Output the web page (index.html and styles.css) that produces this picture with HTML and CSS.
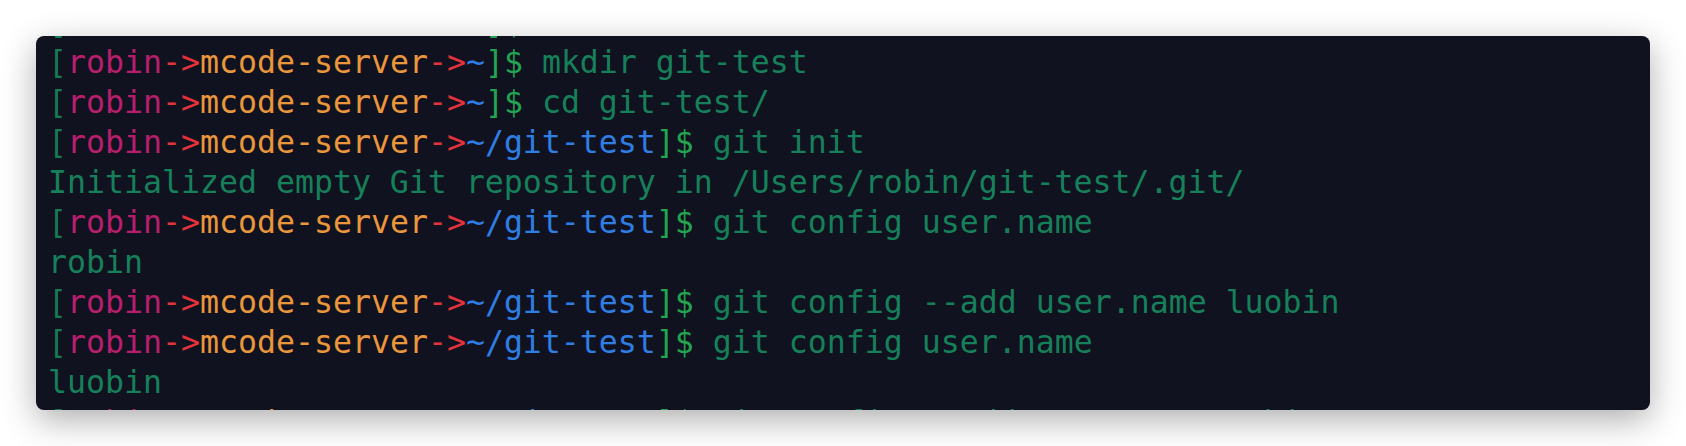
FILE: index.html
```html
<!DOCTYPE html>
<html>
<head>
<meta charset="utf-8">
<link rel="stylesheet" href="styles.css">
</head>
<body>
<div class="stage">
  <div class="term">
    <div class="line first"><span class="br">[</span><span class="user">robin</span><span class="arr">-&gt;</span><span class="host">mcode-server</span><span class="arr">-&gt;</span><span class="path">~</span><span class="br2">]$</span><span class="cmd"> </span></div>
    <div class="line"><span class="br">[</span><span class="user">robin</span><span class="arr">-&gt;</span><span class="host">mcode-server</span><span class="arr">-&gt;</span><span class="path">~</span><span class="br2">]$</span><span class="cmd"> mkdir git-test</span></div>
    <div class="line"><span class="br">[</span><span class="user">robin</span><span class="arr">-&gt;</span><span class="host">mcode-server</span><span class="arr">-&gt;</span><span class="path">~</span><span class="br2">]$</span><span class="cmd"> cd git-test/</span></div>
    <div class="line"><span class="br">[</span><span class="user">robin</span><span class="arr">-&gt;</span><span class="host">mcode-server</span><span class="arr">-&gt;</span><span class="path">~/git-test</span><span class="br2">]$</span><span class="cmd"> git init</span></div>
    <div class="line out">Initialized empty Git repository in /Users/robin/git-test/.git/</div>
    <div class="line"><span class="br">[</span><span class="user">robin</span><span class="arr">-&gt;</span><span class="host">mcode-server</span><span class="arr">-&gt;</span><span class="path">~/git-test</span><span class="br2">]$</span><span class="cmd"> git config user.name</span></div>
    <div class="line out">robin</div>
    <div class="line"><span class="br">[</span><span class="user">robin</span><span class="arr">-&gt;</span><span class="host">mcode-server</span><span class="arr">-&gt;</span><span class="path">~/git-test</span><span class="br2">]$</span><span class="cmd"> git config --add user.name luobin</span></div>
    <div class="line"><span class="br">[</span><span class="user">robin</span><span class="arr">-&gt;</span><span class="host">mcode-server</span><span class="arr">-&gt;</span><span class="path">~/git-test</span><span class="br2">]$</span><span class="cmd"> git config user.name</span></div>
    <div class="line out">luobin</div>
    <div class="line"><span class="br">[</span><span class="user">robin</span><span class="arr">-&gt;</span><span class="host">mcode-server</span><span class="arr">-&gt;</span><span class="path">~/git-test</span><span class="br2">]$</span><span class="cmd"> git config --add user.name robin</span></div>
  </div>
</div>
</body>
</html>
```

FILE: styles.css
```css
html, body {
  margin: 0;
  padding: 0;
  background: #ffffff;
}

.stage {
  padding: 36px;
  width: 1614px;
}

.term {
  width: 1614px;
  height: 374px;
  box-sizing: border-box;
  background: #10121f;
  border-radius: 8px;
  overflow: hidden;
  padding: 6px 0 0 12px;
  box-shadow: 0 10px 34px rgba(0, 0, 0, 0.32);
  font-family: "DejaVu Sans Mono", "Liberation Mono", monospace;
  font-size: 31.56px;
  line-height: 40px;
  color: #16805a;
}

.line {
  height: 40px;
  white-space: pre;
}

.line.first {
  margin-top: -40px;
}

.br { color: #157a55; }
.br2 { color: #22a451; }
.user { color: #b71f6e; }
.arr { color: #e5333b; }
.host { color: #ea963c; }
.path { color: #2f7ee3; }
.cmd, .out { color: #16805a; }
```
